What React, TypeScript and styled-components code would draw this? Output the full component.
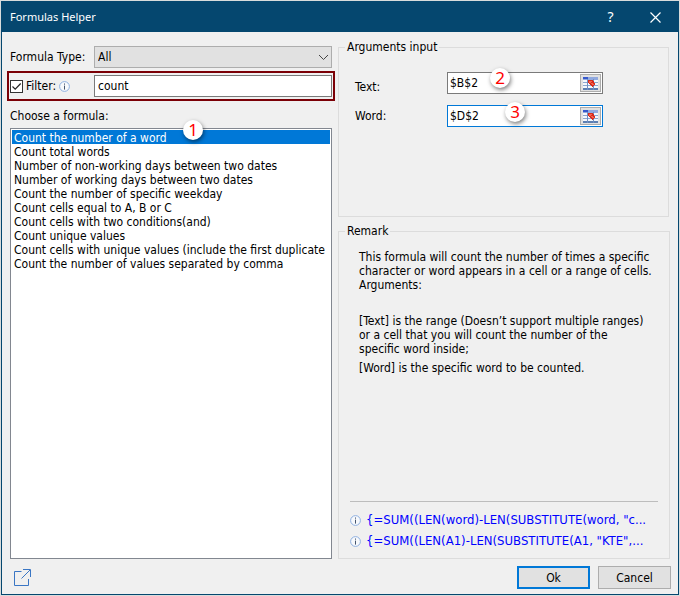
import React, { useState } from "react";
import styled, { createGlobalStyle } from "styled-components";

const GlobalStyle = createGlobalStyle`
  *, *::before, *::after { box-sizing: border-box; }
  body {
    margin: 0;
    background: #d9dcdc;
    color: #000;
    font: 12px/14px "DejaVu Sans Condensed", "DejaVu Sans", Tahoma, sans-serif;
  }
  button, input, select { font: inherit; color: inherit; margin: 0; }
`;

const Desktop = styled.div`
  display: flex;
  min-height: 100vh;
  padding: 1px;
`;

const Dialog = styled.main`
  flex: 1;
  display: flex;
  flex-direction: column;
  min-width: 0;
  background: #f0f0f0;
  border: 1px solid #05476f;
`;

const TitleBar = styled.header`
  display: flex;
  align-items: center;
  height: 30px;
  padding-left: 8px;
  background: #05476f;
  color: #fff;
`;

const Title = styled.h1`
  flex: 1;
  margin: 0;
  font: 11px/16px "Noto Sans", "Open Sans", sans-serif;
`;

const CaptionButton = styled.button`
  display: grid;
  place-items: center;
  width: 45px;
  height: 30px;
  padding: 0;
  border: 0;
  background: none;
  color: #fff;
  font: 14px/16px "Noto Sans", "Open Sans", sans-serif;
`;

const Body = styled.form`
  flex: 1;
  display: grid;
  grid-template-columns: minmax(0, 328fr) minmax(0, 333fr);
  grid-template-rows: 1fr auto;
  column-gap: 3px;
  padding: 7px 7px 5px 5px;
`;

const Column = styled.div`
  display: flex;
  flex-direction: column;
  min-width: 0;
  padding-right: 1px;
`;

const Chooser = styled(Column)`
  padding: 7px 0 0;
`;

const TypeRow = styled.div`
  display: grid;
  grid-template-columns: 84px 1fr;
  align-items: center;
  padding: 0 3px;
`;

const SelectWrap = styled.div`
  position: relative;
  display: flex;
  svg { position: absolute; right: 3px; top: 8px; pointer-events: none; }
`;

const TypeSelect = styled.select`
  flex: 1;
  height: 22px;
  padding: 0 3px;
  appearance: none;
  border: 1px solid #adadad;
  border-radius: 0;
  background: #e1e1e1;
`;

const FilterRow = styled.div`
  display: grid;
  grid-template-columns: 84px 1fr;
  align-items: center;
  height: 30px;
  margin-top: 3px;
  padding: 0 1px;
  border: 2px solid #7b0006;
`;

const FilterLabel = styled.label`
  display: flex;
  align-items: center;
  gap: 3px;
`;

const CheckWrap = styled.span`
  display: grid;
  place-items: center;
  width: 13px;
  height: 13px;
  > * { grid-area: 1 / 1; }
  svg { pointer-events: none; }
`;

const CheckInput = styled.input`
  appearance: none;
  width: 13px;
  height: 13px;
  border: 1px solid #333;
  background: #fff;
  & + svg { visibility: hidden; }
  &:checked + svg { visibility: visible; }
`;

const TextBox = styled.input`
  width: 100%;
  min-width: 0;
  height: 22px;
  padding: 0 3px;
  border: 1px solid #7a7a7a;
  border-radius: 0;
  background: #fff;
`;

const ListHeading = styled.h2`
  margin: 8px 3px 5px;
  font: inherit;
`;

const ListFrame = styled.div`
  position: relative;
  flex: 1;
  display: flex;
  margin: 0 3px;
`;

const FormulaList = styled.ul`
  flex: 1;
  min-width: 0;
  margin: 0;
  padding: 1px;
  overflow: hidden;
  list-style: none;
  border: 1px solid #828790;
  background: #fff;
`;

const FormulaItem = styled.button<{ $selected: boolean }>`
  display: block;
  width: 100%;
  height: 14px;
  padding: 1px 2px 0;
  overflow: visible;
  border: 0;
  text-align: left;
  white-space: nowrap;
  line-height: 14px;
  background: ${(p) => (p.$selected ? "#0078d7" : "transparent")};
  color: ${(p) => (p.$selected ? "#fff" : "#000")};
`;

const Step = styled.span<{ $left: number; $top: number }>`
  position: absolute;
  left: ${(p) => p.$left}px;
  top: ${(p) => p.$top}px;
  display: grid;
  place-items: center;
  width: 20px;
  height: 20px;
  border-radius: 50%;
  background: #fff;
  color: #f00;
  box-shadow: 1px 2px 4px rgba(0, 0, 0, 0.5);
  font: 17px/20px "Noto Sans", "Open Sans", sans-serif;
`;

const Group = styled.fieldset`
  display: flex;
  flex-direction: column;
  min-width: 0;
  margin: 0;
  padding: 0;
  border: 1px solid #dcdcdc;
`;

const ArgumentsGroup = styled(Group)`
  height: 178px;
  margin-right: 1px;
`;

const RemarkGroup = styled(Group)`
  flex: 1;
  margin-top: 6px;
`;

const Legend = styled.legend`
  margin-left: 6px;
  padding: 0 2px;
  line-height: 16px;
`;

const ArgumentList = styled.div`
  display: flex;
  flex-direction: column;
  gap: 11px;
  padding: 17px 65px 0 16px;
`;

const ArgumentRow = styled.div<{ $align: "center" | "end" }>`
  display: grid;
  grid-template-columns: 92px minmax(0, 1fr);
  align-items: ${(p) => p.$align};
`;

const RangeBox = styled.div<{ $active: boolean }>`
  position: relative;
  display: flex;
  align-items: center;
  height: 22px;
  padding-right: 1px;
  border: 1px solid ${(p) => (p.$active ? "#0078d7" : "#7a7a7a")};
  background: #fff;
`;

const RangeInput = styled.input`
  flex: 1;
  min-width: 0;
  height: 18px;
  padding: 0 2px;
  border: 0;
  outline: 0;
  background: transparent;
`;

const PickButton = styled.button`
  display: grid;
  place-items: center;
  width: 21px;
  height: 18px;
  padding: 0;
  border: 1px solid #adadad;
  background: #e1e1e1;
`;

const RemarkText = styled.div`
  padding: 11px 12px 0 20px;
  p { margin: 0; }
  p + p { margin-top: 22px; }
  p + p + p { margin-top: 5px; }
`;

const Samples = styled.ul`
  display: flex;
  flex-direction: column;
  gap: 7px;
  margin: auto 11px 10px;
  padding: 11px 0 0;
  list-style: none;
  border-top: 1px solid #bdbdbd;
`;

const Sample = styled.li`
  display: flex;
  align-items: center;
  gap: 5px;
  color: #00f;
  font-size: 13px;
  white-space: nowrap;
`;

const Footer = styled.footer`
  grid-column: 1 / -1;
  display: flex;
  align-items: center;
  gap: 8px;
  padding-top: 7px;
`;

const OpenButton = styled.button`
  display: flex;
  margin: 0 auto 0 6px;
  padding: 0;
  border: 0;
  background: none;
`;

const DialogButton = styled.button<{ $primary?: boolean }>`
  width: 73px;
  height: 23px;
  padding: 0;
  border: ${(p) => (p.$primary ? "2px solid #0078d7" : "1px solid #adadad")};
  background: #e1e1e1;
`;

const InfoIcon = () => (
  <svg width="11" height="11" viewBox="0 0 11 11" fill="none" aria-hidden="true">
    <circle cx="5.5" cy="5.5" r="4.9" fill="#f7f9fc" stroke="#8fb0e0" />
    <path d="M5.5 2.5v1.2M5.5 4.6v4" stroke="#44546e" />
  </svg>
);

const GridIcon = () => (
  <svg width="15" height="13" viewBox="0 0 15 13" shapeRendering="crispEdges" aria-hidden="true">
    <rect width="15" height="13" fill="#f4f7fc" />
    <rect width="15" height="3" fill="#91a9df" />
    <rect width="5" height="2" fill="#3658cc" />
    <path d="M0 5.5h15M0 8.5h15" stroke="#8ba6cf" />
    <path d="M0 12h15" stroke="#5d7fb2" strokeWidth="2" />
    <path d="M4.5 2v11M10.5 2v11" stroke="#6f8fc2" />
    <path d="M5 3h5v1h1v2h1v2h-1v1h-1v1H9V9H8V8H7V7H6V6H5z" fill="#d92b1b" />
    <path d="M6 4h3v1H8v1h2v1h1v1H9V7H8V6H6z" fill="#f26450" />
  </svg>
);

const formulas = [
  "Count the number of a word",
  "Count total words",
  "Number of non-working days between two dates",
  "Number of working days between two dates",
  "Count the number of specific weekday",
  "Count cells equal to A, B or C",
  "Count cells with two conditions(and)",
  "Count unique values",
  "Count cells with unique values (include the first duplicate",
  "Count the number of values separated by comma",
];

const args = [
  { id: "text", label: "Text:", value: "$B$2", active: false, align: "end", step: 2, left: 42, top: -5 },
  { id: "word", label: "Word:", value: "$D$2", active: true, align: "center", step: 3, left: 57, top: -4 },
] as const;

const samples = [
  '{=SUM((LEN(word)-LEN(SUBSTITUTE(word, "c...',
  '{=SUM((LEN(A1)-LEN(SUBSTITUTE(A1, "KTE",...',
];

export default function App() {
  const [selected, setSelected] = useState(0);

  return (
    <>
      <GlobalStyle />
      <Desktop>
        <Dialog>
          <TitleBar>
            <Title>Formulas Helper</Title>
            <CaptionButton type="button" aria-label="Help">?</CaptionButton>
            <CaptionButton type="button" aria-label="Close">
              <svg width="11" height="11" viewBox="0 0 11 11" stroke="#fff" strokeWidth="1.2">
                <path d="M.5.5l10 10M10.5.5l-10 10" />
              </svg>
            </CaptionButton>
          </TitleBar>
          <Body onSubmit={(e) => e.preventDefault()}>
            <Chooser>
              <TypeRow>
                <label htmlFor="type">Formula Type:</label>
                <SelectWrap>
                  <TypeSelect id="type">
                    <option>All</option>
                  </TypeSelect>
                  <svg width="11" height="7" viewBox="0 0 11 7" fill="none" stroke="#444">
                    <path d="M1 1l4.5 4.5L10 1" />
                  </svg>
                </SelectWrap>
              </TypeRow>
              <FilterRow>
                <FilterLabel>
                  <CheckWrap>
                    <CheckInput type="checkbox" defaultChecked />
                    <svg width="13" height="13" viewBox="0 0 13 13" fill="none" stroke="#222" strokeWidth="1.2">
                      <path d="M2.5 6.5l2.7 2.7L10.7 3.5" />
                    </svg>
                  </CheckWrap>
                  Filter:
                  <InfoIcon />
                </FilterLabel>
                <TextBox aria-label="Filter" defaultValue="count" />
              </FilterRow>
              <ListHeading>Choose a formula:</ListHeading>
              <ListFrame>
                <FormulaList aria-label="Formulas">
                  {formulas.map((name, i) => (
                    <li key={name}>
                      <FormulaItem
                        type="button"
                        $selected={i === selected}
                        aria-pressed={i === selected}
                        onClick={() => setSelected(i)}
                      >
                        {name}
                      </FormulaItem>
                    </li>
                  ))}
                </FormulaList>
                <Step $left={173} $top={-8}>1</Step>
              </ListFrame>
            </Chooser>
            <Column>
              <ArgumentsGroup>
                <Legend>Arguments input</Legend>
                <ArgumentList>
                  {args.map((a) => (
                    <ArgumentRow key={a.id} $align={a.align}>
                      <label htmlFor={a.id}>{a.label}</label>
                      <RangeBox $active={a.active}>
                        <RangeInput id={a.id} defaultValue={a.value} />
                        <PickButton type="button" aria-label={`Select range for ${a.id}`}>
                          <GridIcon />
                        </PickButton>
                        <Step $left={a.left} $top={a.top}>{a.step}</Step>
                      </RangeBox>
                    </ArgumentRow>
                  ))}
                </ArgumentList>
              </ArgumentsGroup>
              <RemarkGroup>
                <Legend>Remark</Legend>
                <RemarkText>
                  <p>
                    This formula will count the number of times a specific
                    <br />
                    character or word appears in a cell or a range of cells.
                    <br />
                    Arguments:
                  </p>
                  <p>
                    [Text] is the range (Doesn’t support multiple ranges)
                    <br />
                    or a cell that you will count the number of the
                    <br />
                    specific word inside;
                  </p>
                  <p>[Word] is the specific word to be counted.</p>
                </RemarkText>
                <Samples>
                  {samples.map((s) => (
                    <Sample key={s}>
                      <InfoIcon />
                      {s}
                    </Sample>
                  ))}
                </Samples>
              </RemarkGroup>
            </Column>
            <Footer>
              <OpenButton type="button" aria-label="Open in new window">
                <svg width="18" height="18" viewBox="0 0 18 18" fill="none" stroke="#3a76c4">
                  <path d="M8.5 2.5h-7v14h14V10M10 .5h7.5V8M17 1L8.5 9.5" />
                </svg>
              </OpenButton>
              <DialogButton $primary type="submit">Ok</DialogButton>
              <DialogButton type="button">Cancel</DialogButton>
            </Footer>
          </Body>
        </Dialog>
      </Desktop>
    </>
  );
}
